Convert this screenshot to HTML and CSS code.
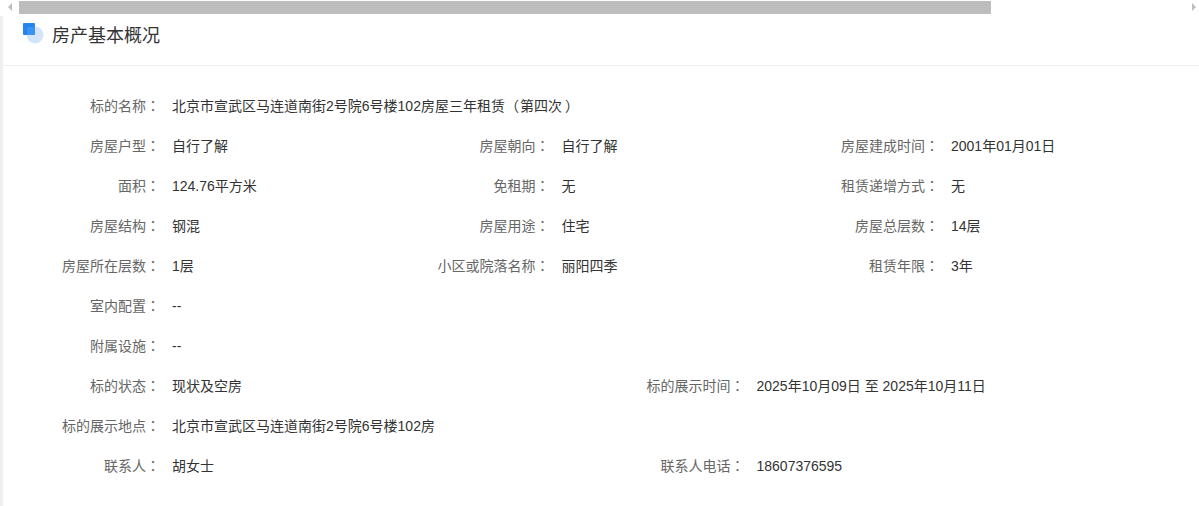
FILE: index.html
```html
<!DOCTYPE html>
<html lang="zh-CN">
<head>
<meta charset="utf-8">
<title>房产基本概况</title>
<link rel="stylesheet" href="styles.css">
</head>
<body>
<div class="scrollbar">
  <span class="arrow arrow-left"></span>
  <div class="track"><div class="thumb"></div></div>
  <span class="arrow arrow-right"></span>
</div>
<section class="card">
  <header class="card-head">
    <svg class="head-icon" width="22" height="22" viewBox="0 0 22 22" aria-hidden="true">
      <circle cx="13" cy="13" r="8.5" fill="#d3e5fb"/>
      <rect x="1" y="1" width="12" height="12" rx="1" fill="#2485ee"/>
      <rect x="5" y="5" width="8" height="8" fill="#4b9df3" opacity=".6"/>
    </svg>
    <h2 class="card-title">房产基本概况</h2>
  </header>
  <div class="info">
    <div class="row">
      <div class="cell"><span class="label">标的名称<span class="punct">：</span></span><span class="value">北京市宣武区马连道南街2号院6号楼102房屋三年租赁<span class="paren-open">（</span>第四次<span class="paren-close">）</span></span></div>
    </div>
    <div class="row thirds">
      <div class="cell"><span class="label">房屋户型<span class="punct">：</span></span><span class="value">自行了解</span></div>
      <div class="cell"><span class="label">房屋朝向<span class="punct">：</span></span><span class="value">自行了解</span></div>
      <div class="cell"><span class="label">房屋建成时间<span class="punct">：</span></span><span class="value">2001年01月01日</span></div>
    </div>
    <div class="row thirds">
      <div class="cell"><span class="label">面积<span class="punct">：</span></span><span class="value">124.76平方米</span></div>
      <div class="cell"><span class="label">免租期<span class="punct">：</span></span><span class="value">无</span></div>
      <div class="cell"><span class="label">租赁递增方式<span class="punct">：</span></span><span class="value">无</span></div>
    </div>
    <div class="row thirds">
      <div class="cell"><span class="label">房屋结构<span class="punct">：</span></span><span class="value">钢混</span></div>
      <div class="cell"><span class="label">房屋用途<span class="punct">：</span></span><span class="value">住宅</span></div>
      <div class="cell"><span class="label">房屋总层数<span class="punct">：</span></span><span class="value">14层</span></div>
    </div>
    <div class="row thirds">
      <div class="cell"><span class="label">房屋所在层数<span class="punct">：</span></span><span class="value">1层</span></div>
      <div class="cell"><span class="label">小区或院落名称<span class="punct">：</span></span><span class="value">丽阳四季</span></div>
      <div class="cell"><span class="label">租赁年限<span class="punct">：</span></span><span class="value">3年</span></div>
    </div>
    <div class="row">
      <div class="cell"><span class="label">室内配置<span class="punct">：</span></span><span class="value">--</span></div>
    </div>
    <div class="row">
      <div class="cell"><span class="label">附属设施<span class="punct">：</span></span><span class="value">--</span></div>
    </div>
    <div class="row halves">
      <div class="cell"><span class="label">标的状态<span class="punct">：</span></span><span class="value">现状及空房</span></div>
      <div class="cell"><span class="label">标的展示时间<span class="punct">：</span></span><span class="value">2025年10月09日 至 2025年10月11日</span></div>
    </div>
    <div class="row">
      <div class="cell"><span class="label">标的展示地点<span class="punct">：</span></span><span class="value">北京市宣武区马连道南街2号院6号楼102房</span></div>
    </div>
    <div class="row halves">
      <div class="cell"><span class="label">联系人<span class="punct">：</span></span><span class="value">胡女士</span></div>
      <div class="cell"><span class="label">联系人电话<span class="punct">：</span></span><span class="value">18607376595</span></div>
    </div>
  </div>
</section>
</body>
</html>
```
FILE: styles.css
```css
* { box-sizing: border-box; }
html, body { margin: 0; padding: 0; background: #fff; }
body {
  width: 1199px;
  height: 506px;
  overflow: hidden;
  font-family: "Liberation Sans", "Noto Sans CJK SC", sans-serif;
  font-size: 14px;
  color: #333;
}
.scrollbar {
  display: flex;
  align-items: center;
  height: 16px;
  padding-bottom: 2px;
  background: #fff;
}
.arrow {
  width: 0;
  height: 0;
  border-top: 4px solid transparent;
  border-bottom: 4px solid transparent;
}
.arrow-left { margin-left: 8px; border-right: 4px solid #bdbdbd; }
.arrow-right { margin-right: 3px; border-left: 4px solid #bdbdbd; }
.track { flex: 1; height: 13px; margin: 0 3px 0 7px; }
.thumb { width: 972px; height: 13px; background: #bdbdbd; }
.card {
  height: 490px;
  border-left: 3px solid #eeeef3;
  background: #fff;
}
.card-head {
  display: flex;
  align-items: flex-start;
  height: 50px;
  padding-left: 19px;
  border-bottom: 1px solid #eeeeee;
}
.head-icon { margin-top: 6px; margin-right: 8px; flex: none; }
.card-title { margin: 9px 0 0; font-size: 18px; line-height: 22px; font-weight: 400; color: #333; }
.info { padding-top: 20px; }
.row { display: grid; height: 40px; align-items: center; }
.thirds { grid-template-columns: 389.5px 389.5px 1fr; }
.halves { grid-template-columns: 584.5px 1fr; }
.cell { display: flex; align-items: center; line-height: 20px; }
.label { width: 157px; flex: none; text-align: right; color: #666; }
.value { margin-left: 12px; color: #333; white-space: nowrap; }
.punct { font-family: "Noto Sans CJK TC", sans-serif; font-feature-settings: "locl" 0; line-height: 0; }
.paren-open { padding-right: 1px; line-height: 0; }
.paren-close { padding-left: 3px; line-height: 0; }
```
